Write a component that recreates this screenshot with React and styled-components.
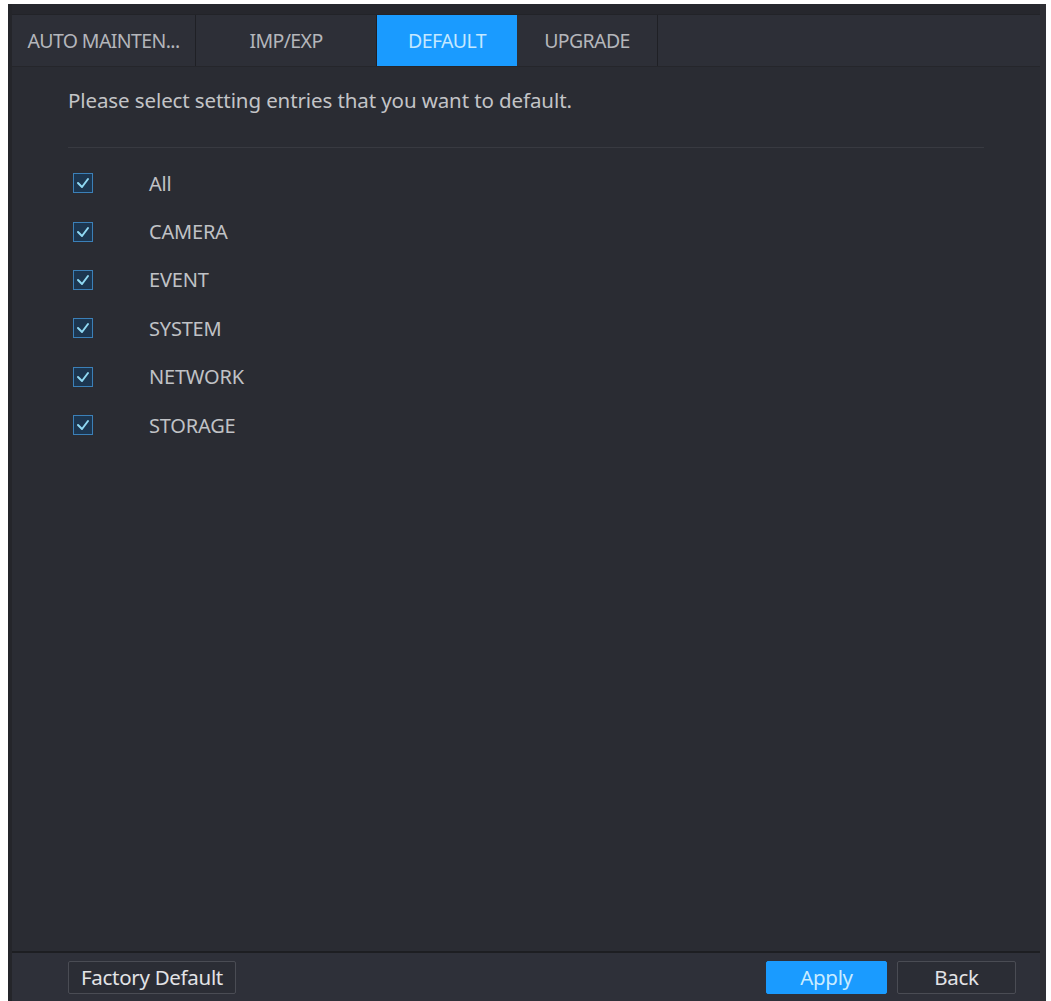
import React, { useState } from "react";
import styled, { createGlobalStyle } from "styled-components";

const GlobalStyle = createGlobalStyle`
    body {
        margin: 0;
        background: #ffffff;
        font-family: "Noto Sans", "Open Sans", sans-serif;
    }
`;

const Panel = styled.div`
    margin: 4px 5px 0 8px;
    height: 997px;
    background-color: #2a2c33;
    border-left: 4px solid #24252a;
    border-right: 6px solid #2f2f34;
    display: flex;
    flex-direction: column;
    box-sizing: border-box;
`;

const TopStrip = styled.div`
    height: 10px;
    background-color: #26272d;
    border-bottom: 1px solid #222328;
`;

const TabBar = styled.div`
    display: flex;
    height: 51px;
    background-color: #2d2f37;
    border-bottom: 1px solid #25262b;
`;

const Tab = styled.div`
    width: ${(p) => p.width}px;
    display: flex;
    align-items: center;
    justify-content: center;
    font-size: 19.5px;
    letter-spacing: -0.6px;
    color: ${(p) => (p.active ? "#c4e8ff" : "#b4b6bb")};
    background-color: ${(p) => (p.active ? "#1a9bff" : "transparent")};
    border-right: ${(p) => (p.active ? "none" : "1px solid #1f2025")};
    box-sizing: border-box;
    white-space: nowrap;
`;

const Content = styled.div`
    flex: 1;
    padding: 13px 56px 0 56px;
`;

const Hint = styled.p`
    margin: 0;
    height: 40px;
    display: flex;
    align-items: center;
    font-size: 20.5px;
    color: #c3c4c7;
    letter-spacing: -0.1px;
`;

const Divider = styled.div`
    height: 1px;
    margin-top: 27px;
    background-color: #383a41;
`;

const List = styled.div`
    display: flex;
    flex-direction: column;
    margin-top: 11px;
`;

const Row = styled.label`
    display: flex;
    align-items: center;
    height: 48.4px;
    font-size: 20px;
    letter-spacing: -0.2px;
    color: #c0c2c6;
    cursor: pointer;
`;

const Box = styled.span`
    width: 18px;
    height: 18px;
    margin-left: 5px;
    margin-right: 56px;
    border: 1.5px solid #3b80b8;
    background-color: #1c3650;
    display: flex;
    align-items: center;
    justify-content: center;
`;

const Footer = styled.div`
    height: 48px;
    border-top: 2px solid #1d1e22;
    background-color: #2e3039;
    display: flex;
    align-items: center;
    padding: 0 24px 0 56px;
`;

const Button = styled.button`
    height: 33px;
    width: ${(p) => p.width}px;
    margin-left: ${(p) => p.gap || 0}px;
    font-family: "Noto Sans", "Open Sans", sans-serif;
    font-size: 20.5px;
    letter-spacing: -0.3px;
    color: ${(p) => (p.primary ? "#c9ecff" : "#e2e3e6")};
    background-color: ${(p) => (p.primary ? "#1a9bff" : "#2b2d35")};
    border: 1px solid ${(p) => (p.primary ? "#1a9bff" : "#4a4c54")};
    border-radius: 2px;
    padding: 0;
`;

const Spacer = styled.div`
    flex: 1;
`;

const tabs = [
    { label: "AUTO MAINTEN...", width: 184 },
    { label: "IMP/EXP", width: 181 },
    { label: "DEFAULT", width: 140, active: true },
    { label: "UPGRADE", width: 141 },
];

const entries = ["All", "CAMERA", "EVENT", "SYSTEM", "NETWORK", "STORAGE"];

function Check() {
    return (
        <svg width="14" height="12" viewBox="0 0 14 12">
            <polyline
                points="2,6 6,10 12,2"
                fill="none"
                stroke="#8fd8f2"
                strokeWidth="2"
                strokeLinecap="round"
                strokeLinejoin="round"
            />
        </svg>
    );
}

export default function App() {
    const [checked, setChecked] = useState(entries.map(() => true));

    const toggle = (i) => {
        const next = [...checked];
        next[i] = !next[i];
        setChecked(next);
    };

    return (
        <>
            <GlobalStyle />
            <Panel>
                <TopStrip />
                <TabBar>
                    {tabs.map((t) => (
                        <Tab key={t.label} width={t.width} active={t.active}>
                            {t.label}
                        </Tab>
                    ))}
                </TabBar>
                <Content>
                    <Hint>Please select setting entries that you want to default.</Hint>
                    <Divider />
                    <List>
                        {entries.map((e, i) => (
                            <Row key={e} onClick={() => toggle(i)}>
                                <Box>{checked[i] && <Check />}</Box>
                                {e}
                            </Row>
                        ))}
                    </List>
                </Content>
                <Footer>
                    <Button width={168}>Factory Default</Button>
                    <Spacer />
                    <Button primary width={121}>Apply</Button>
                    <Button width={119} gap={10}>Back</Button>
                </Footer>
            </Panel>
        </>
    );
}
